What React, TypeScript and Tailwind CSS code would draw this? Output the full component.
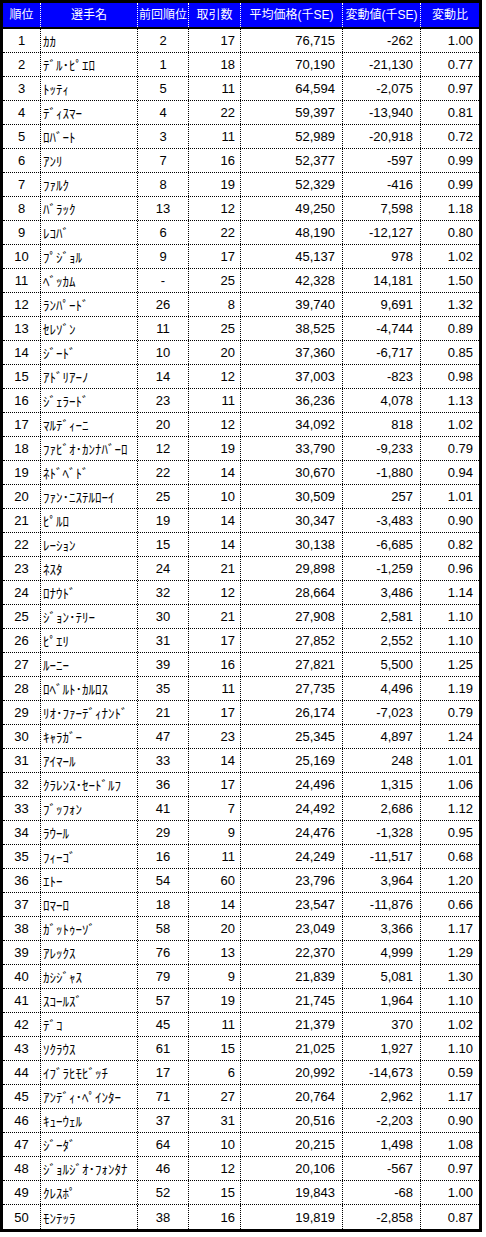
import React from "react";

type Row = [number, string, string, number, string, string, string];

const rows: Row[] = [
  [1, "ｶｶ", "2", 17, "76,715", "-262", "1.00"],
  [2, "ﾃﾞﾙ･ﾋﾟｴﾛ", "1", 18, "70,190", "-21,130", "0.77"],
  [3, "ﾄｯﾃｨ", "5", 11, "64,594", "-2,075", "0.97"],
  [4, "ﾃﾞｨｽﾏｰ", "4", 22, "59,397", "-13,940", "0.81"],
  [5, "ﾛﾊﾞｰﾄ", "3", 11, "52,989", "-20,918", "0.72"],
  [6, "ｱﾝﾘ", "7", 16, "52,377", "-597", "0.99"],
  [7, "ﾌｧﾙｸ", "8", 19, "52,329", "-416", "0.99"],
  [8, "ﾊﾞﾗｯｸ", "13", 12, "49,250", "7,598", "1.18"],
  [9, "ﾚｺﾊﾞ", "6", 22, "48,190", "-12,127", "0.80"],
  [10, "ﾌﾟｼﾞｮﾙ", "9", 17, "45,137", "978", "1.02"],
  [11, "ﾍﾞｯｶﾑ", "-", 25, "42,328", "14,181", "1.50"],
  [12, "ﾗﾝﾊﾟｰﾄﾞ", "26", 8, "39,740", "9,691", "1.32"],
  [13, "ｾﾚｿﾞﾝ", "11", 25, "38,525", "-4,744", "0.89"],
  [14, "ｼﾞｰﾄﾞ", "10", 20, "37,360", "-6,717", "0.85"],
  [15, "ｱﾄﾞﾘｱｰﾉ", "14", 12, "37,003", "-823", "0.98"],
  [16, "ｼﾞｪﾗｰﾄﾞ", "23", 11, "36,236", "4,078", "1.13"],
  [17, "ﾏﾙﾃﾞｨｰﾆ", "20", 12, "34,092", "818", "1.02"],
  [18, "ﾌｧﾋﾞｵ･ｶﾝﾅﾊﾞｰﾛ", "12", 19, "33,790", "-9,233", "0.79"],
  [19, "ﾈﾄﾞﾍﾞﾄﾞ", "22", 14, "30,670", "-1,880", "0.94"],
  [20, "ﾌｧﾝ･ﾆｽﾃﾙﾛｰｲ", "25", 10, "30,509", "257", "1.01"],
  [21, "ﾋﾟﾙﾛ", "19", 14, "30,347", "-3,483", "0.90"],
  [22, "ﾚｰｼｮﾝ", "15", 14, "30,138", "-6,685", "0.82"],
  [23, "ﾈｽﾀ", "24", 21, "29,898", "-1,259", "0.96"],
  [24, "ﾛﾅｳﾄﾞ", "32", 12, "28,664", "3,486", "1.14"],
  [25, "ｼﾞｮﾝ･ﾃﾘｰ", "30", 21, "27,908", "2,581", "1.10"],
  [26, "ﾋﾟｴﾘ", "31", 17, "27,852", "2,552", "1.10"],
  [27, "ﾙｰﾆｰ", "39", 16, "27,821", "5,500", "1.25"],
  [28, "ﾛﾍﾞﾙﾄ･ｶﾙﾛｽ", "35", 11, "27,735", "4,496", "1.19"],
  [29, "ﾘｵ･ﾌｧｰﾃﾞｨﾅﾝﾄﾞ", "21", 17, "26,174", "-7,023", "0.79"],
  [30, "ｷｬﾗｶﾞｰ", "47", 23, "25,345", "4,897", "1.24"],
  [31, "ｱｲﾏｰﾙ", "33", 14, "25,169", "248", "1.01"],
  [32, "ｸﾗﾚﾝｽ･ｾｰﾄﾞﾙﾌ", "36", 17, "24,496", "1,315", "1.06"],
  [33, "ﾌﾞｯﾌｫﾝ", "41", 7, "24,492", "2,686", "1.12"],
  [34, "ﾗｳｰﾙ", "29", 9, "24,476", "-1,328", "0.95"],
  [35, "ﾌｨｰｺﾞ", "16", 11, "24,249", "-11,517", "0.68"],
  [36, "ｴﾄｰ", "54", 60, "23,796", "3,964", "1.20"],
  [37, "ﾛﾏｰﾛ", "18", 14, "23,547", "-11,876", "0.66"],
  [38, "ｶﾞｯﾄｩｰｿﾞ", "58", 20, "23,049", "3,366", "1.17"],
  [39, "ｱﾚｯｸｽ", "76", 13, "22,370", "4,999", "1.29"],
  [40, "ｶｼｼﾞｬｽ", "79", 9, "21,839", "5,081", "1.30"],
  [41, "ｽｺｰﾙｽﾞ", "57", 19, "21,745", "1,964", "1.10"],
  [42, "ﾃﾞｺ", "45", 11, "21,379", "370", "1.02"],
  [43, "ｿｸﾗｳｽ", "61", 15, "21,025", "1,927", "1.10"],
  [44, "ｲﾌﾞﾗﾋﾓﾋﾞｯﾁ", "17", 6, "20,992", "-14,673", "0.59"],
  [45, "ｱﾝﾃﾞｨ･ﾍﾟｲﾝﾀｰ", "71", 27, "20,764", "2,962", "1.17"],
  [46, "ｷｭｰｳｪﾙ", "37", 31, "20,516", "-2,203", "0.90"],
  [47, "ｼﾞｰﾀﾞ", "64", 10, "20,215", "1,498", "1.08"],
  [48, "ｼﾞｮﾙｼﾞｵ･ﾌｫﾝﾀﾅ", "46", 12, "20,106", "-567", "0.97"],
  [49, "ｸﾚｽﾎﾟ", "52", 15, "19,843", "-68", "1.00"],
  [50, "ﾓﾝﾃｯﾗ", "38", 16, "19,819", "-2,858", "0.87"],
];

const headers = ["順位", "選手名", "前回順位", "取引数", "平均価格(千SE)", "変動値(千SE)", "変動比"];

const cols = "grid grid-cols-[37px_97px_51px_52px_102px_78px_59px]";
const cell = "flex items-center border-l border-dotted border-black first:border-l-0 whitespace-nowrap overflow-hidden";

export default function App() {
  return (
    <div className="bg-white min-h-screen text-[13px] leading-none text-black font-['Liberation_Sans','Noto_Sans_CJK_JP',sans-serif]">
      <div className="w-[482px] border-[3px] border-black">
        {/* header */}
        <div className={`${cols} h-[26px] bg-[#0000ff] text-white text-[12px] border-b-2 border-black`}>
          {headers.map((h) => (
            <div
              key={h}
              className="flex items-center justify-center border-l border-dotted border-white first:border-l-0 whitespace-nowrap"
            >
              {h}
            </div>
          ))}
        </div>

        {/* body */}
        {rows.map((r) => (
          <div key={r[0]} className={`${cols} h-[24px] border-b border-dotted border-black last:border-b-0`}>
            <div className={`${cell} justify-center`}>{r[0]}</div>
            <div className={`${cell} pl-[2px] font-['Noto_Sans_CJK_JP',sans-serif]`}>{r[1]}</div>
            <div className={`${cell} justify-center`}>{r[2]}</div>
            <div className={`${cell} justify-end pr-[5px]`}>{r[3]}</div>
            <div className={`${cell} justify-end pr-[7px]`}>{r[4]}</div>
            <div className={`${cell} justify-end pr-[7px]`}>{r[5]}</div>
            <div className={`${cell} justify-end pr-[6px]`}>{r[6]}</div>
          </div>
        ))}
      </div>
    </div>
  );
}
